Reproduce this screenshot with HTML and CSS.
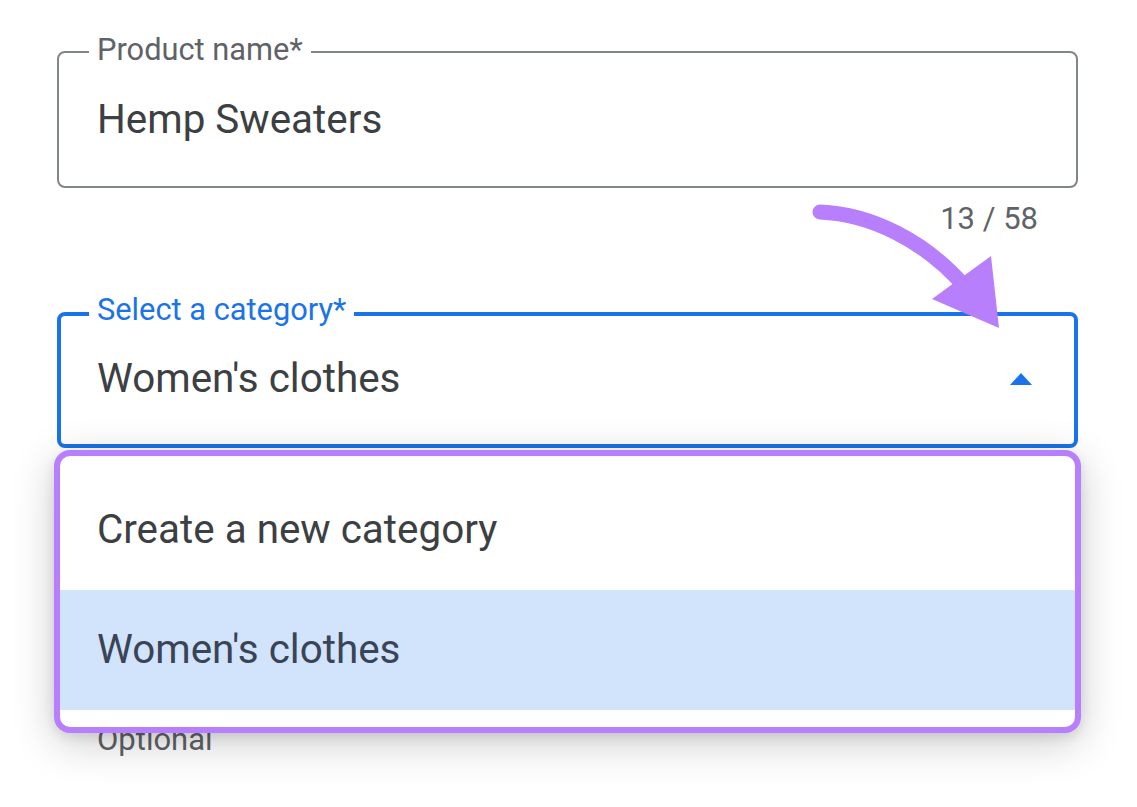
FILE: index.html
```html
<!DOCTYPE html>
<html lang="en">
<head>
<meta charset="utf-8">
<title>Product form</title>
<link rel="stylesheet" href="styles.css">
</head>
<body>
<div class="page">
  <div class="field field-outline">
    <span class="float-label">Product name*</span>
    <span class="field-value">Hemp Sweaters</span>
  </div>
  <div class="counter">13 / 58</div>

  <div class="select-wrap">
    <div class="field field-focused">
      <span class="float-label label-focused">Select a category*</span>
      <span class="field-value">Women's clothes</span>
      <span class="caret-up"></span>
    </div>
    <ul class="menu">
      <li class="menu-item">Create a new category</li>
      <li class="menu-item menu-item-selected">Women's clothes</li>
    </ul>
  </div>

  <div class="helper">Optional</div>

  <svg class="callout-arrow" viewBox="800 195 210 140" width="210" height="140" aria-hidden="true">
    <path d="M820 212 C 870 214, 925 240, 966 288" fill="none" stroke="#b77ffc" stroke-width="15" stroke-linecap="round"/>
    <polygon points="932,299 991,256 999,328" fill="#b77ffc"/>
  </svg>
</div>
</body>
</html>
```

FILE: styles.css
```css
* {
  box-sizing: border-box;
}

html, body {
  margin: 0;
  padding: 0;
  background: #ffffff;
}

body {
  font-family: Roboto, "Liberation Sans", Arial, sans-serif;
  color: #3c4043;
}

.page {
  position: relative;
  width: 1137px;
  height: 807px;
  overflow: hidden;
  padding: 51px 59px 0 57px;
  display: flex;
  flex-direction: column;
}

.field {
  position: relative;
  display: flex;
  align-items: center;
  border-radius: 8px;
  background: #ffffff;
}

.field-outline {
  height: 137px;
  border: 2px solid #80868b;
  padding-left: 38px;
}

.field-focused {
  height: 136px;
  border: 4px solid #1a73e8;
  padding-left: 36px;
  padding-right: 42px;
}

.float-label {
  position: absolute;
  top: -18px;
  left: 30px;
  padding: 0 8px;
  background: #ffffff;
  font-size: 30.8px;
  line-height: 30px;
  color: #5f6368;
  white-space: nowrap;
}

.label-focused {
  top: -21px;
  left: 28px;
  color: #1a73e8;
}

.field-value {
  flex: 1;
  font-size: 40.4px;
  line-height: 48px;
  color: #3c4043;
  white-space: nowrap;
}

.field-focused .field-value {
  margin-top: -3px;
}

.caret-up {
  width: 0;
  height: 0;
  border-left: 11.5px solid transparent;
  border-right: 11.5px solid transparent;
  border-bottom: 12px solid #1a73e8;
  margin-top: -2px;
}

.counter {
  margin-top: 16px;
  padding-right: 40px;
  text-align: right;
  font-size: 31px;
  line-height: 30px;
  color: #5f6368;
}

.select-wrap {
  position: relative;
  margin-top: 78px;
}

.menu {
  position: absolute;
  top: 138px;
  left: -3px;
  right: -3px;
  margin: 0;
  padding: 14px 0 17px;
  list-style: none;
  background: #ffffff;
  border: 6px solid #b77ffc;
  border-radius: 16px;
  box-shadow: 0 10px 44px rgba(0, 0, 0, 0.2), 0 4px 12px rgba(0, 0, 0, 0.1);
  z-index: 2;
}

.menu-item {
  height: 120px;
  display: flex;
  align-items: center;
  padding-left: 37px;
  font-size: 40.4px;
  line-height: 48px;
  color: #3c4043;
}

.menu-item-selected {
  background: #d2e3fc;
  color: #394457;
}

.helper {
  margin-top: 277px;
  padding-left: 40px;
  font-size: 31px;
  line-height: 30px;
  color: #5f6368;
}

.callout-arrow {
  position: absolute;
  left: 800px;
  top: 195px;
  z-index: 3;
  pointer-events: none;
}
```
